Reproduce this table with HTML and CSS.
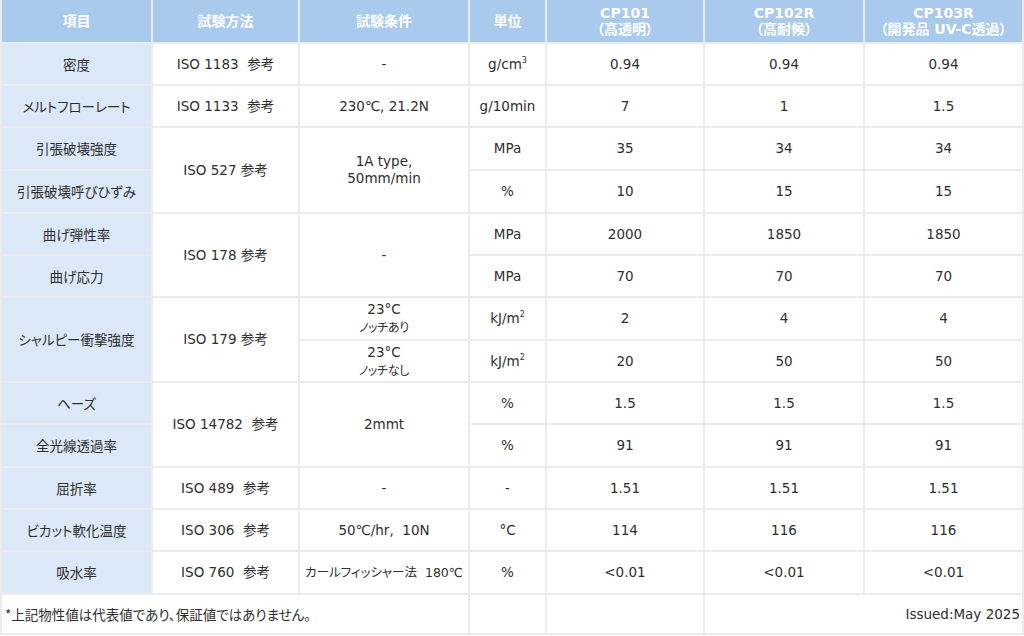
FILE: index.html
```html
<!DOCTYPE html>
<html lang="ja">
<head>
<meta charset="utf-8">
<title>物性表</title>
<link rel="stylesheet" href="styles.css">
</head>
<body>
<table class="spec">
  <colgroup>
    <col class="c1"><col class="c2"><col class="c3"><col class="c4"><col class="c5"><col class="c6"><col class="c7">
  </colgroup>
  <thead>
    <tr class="hr">
      <th>項目</th>
      <th>試験方法</th>
      <th>試験条件</th>
      <th>単位</th>
      <th>CP101<br><span class="sub">（高透明）</span></th>
      <th>CP102R<br><span class="sub">（高耐候）</span></th>
      <th>CP103R<br><span class="sub">（開発品 UV-C透過）</span></th>
    </tr>
  </thead>
  <tbody>
    <tr class="h40">
      <td class="item">密度</td>
      <td>ISO 1183&nbsp;&nbsp;参考</td>
      <td>-</td>
      <td>g/cm<sup>3</sup></td>
      <td>0.94</td><td>0.94</td><td>0.94</td>
    </tr>
    <tr class="h40">
      <td class="item">メルトフローレート</td>
      <td>ISO 1133&nbsp;&nbsp;参考</td>
      <td>230℃, 21.2N</td>
      <td>g/10min</td>
      <td>7</td><td>1</td><td>1.5</td>
    </tr>
    <tr class="h41">
      <td class="item">引張破壊強度</td>
      <td rowspan="2">ISO 527 参考</td>
      <td rowspan="2">1A type,<br>50mm/min</td>
      <td>MPa</td>
      <td>35</td><td>34</td><td>34</td>
    </tr>
    <tr class="h41">
      <td class="item">引張破壊呼びひずみ</td>
      <td>%</td>
      <td>10</td><td>15</td><td>15</td>
    </tr>
    <tr class="h40">
      <td class="item">曲げ弾性率</td>
      <td rowspan="2">ISO 178 参考</td>
      <td rowspan="2">-</td>
      <td>MPa</td>
      <td>2000</td><td>1850</td><td>1850</td>
    </tr>
    <tr class="h40">
      <td class="item">曲げ応力</td>
      <td>MPa</td>
      <td>70</td><td>70</td><td>70</td>
    </tr>
    <tr class="h41">
      <td class="item" rowspan="2">シャルピー衝撃強度</td>
      <td rowspan="2">ISO 179 参考</td>
      <td class="cond">23°C<br><span class="note">ノッチあり</span></td>
      <td>kJ/m<sup>2</sup></td>
      <td>2</td><td>4</td><td>4</td>
    </tr>
    <tr class="h40">
      <td class="cond">23°C<br><span class="note">ノッチなし</span></td>
      <td>kJ/m<sup>2</sup></td>
      <td>20</td><td>50</td><td>50</td>
    </tr>
    <tr class="h40">
      <td class="item">ヘーズ</td>
      <td rowspan="2">ISO 14782&nbsp;&nbsp;参考</td>
      <td rowspan="2">2mmt</td>
      <td>%</td>
      <td>1.5</td><td>1.5</td><td>1.5</td>
    </tr>
    <tr class="h41">
      <td class="item">全光線透過率</td>
      <td>%</td>
      <td>91</td><td>91</td><td>91</td>
    </tr>
    <tr class="h40">
      <td class="item">屈折率</td>
      <td>ISO 489&nbsp;&nbsp;参考</td>
      <td>-</td>
      <td>-</td>
      <td>1.51</td><td>1.51</td><td>1.51</td>
    </tr>
    <tr class="h40">
      <td class="item">ビカット軟化温度</td>
      <td>ISO 306&nbsp;&nbsp;参考</td>
      <td>50℃/hr,&nbsp;&nbsp;10N</td>
      <td>°C</td>
      <td>114</td><td>116</td><td>116</td>
    </tr>
    <tr class="h41">
      <td class="item">吸水率</td>
      <td>ISO 760&nbsp;&nbsp;参考</td>
      <td class="small">カールフィッシャー法&nbsp;&nbsp;180℃</td>
      <td>%</td>
      <td>&lt;0.01</td><td>&lt;0.01</td><td>&lt;0.01</td>
    </tr>
    <tr class="foot">
      <td colspan="3" class="footnote">*上記物性値は代表値であり、保証値ではありません。</td>
      <td></td>
      <td></td>
      <td colspan="2" class="issued">Issued:May 2025</td>
    </tr>
  </tbody>
</table>
</body>
</html>
```

FILE: styles.css
```css
html, body {
  margin: 0;
  padding: 0;
  background: #ffffff;
  overflow: hidden;
}

.spec {
  width: 1024px;
  table-layout: fixed;
  border-collapse: separate;
  border-spacing: 2px;
  background: #ebebeb;
  margin-top: -2px;
  font-family: "DejaVu Sans", "Noto Sans CJK JP", sans-serif;
  font-feature-settings: "palt";
  font-size: 13.5px;
  color: #2e2e2e;
}

.c1 { width: 149px; }
.c2 { width: 145px; }
.c3 { width: 168px; }
.c4 { width: 75px; }
.c5 { width: 156px; }
.c6 { width: 158px; }
.c7 { width: 157px; }

.spec th,
.spec td {
  padding: 0;
  text-align: center;
  vertical-align: middle;
  background: #ffffff;
  line-height: 17px;
}

.spec th {
  background: #a9caec;
  color: #ffffff;
  font-weight: bold;
  font-size: 14px;
  line-height: 16px;
  height: 42px;
}

.spec th .sub {
  font-weight: bold;
}

.spec td.item {
  background: #dbe8f7;
  font-family: "Noto Sans CJK JP", sans-serif;
  font-size: 13.5px;
}

.h40 td { height: 40px; }
.h41 td { height: 41px; }

.spec sup {
  font-size: 8px;
  line-height: 0;
  vertical-align: 6px;
}

.cond {
  line-height: 16px;
}

.note {
  font-family: "Noto Sans CJK JP", sans-serif;
  font-size: 12px;
  letter-spacing: -0.3px;
}

.small {
  font-size: 12.5px;
}

.foot td {
  height: 38px;
  font-size: 13px;
}

.spec td.footnote {
  text-align: left;
  padding-left: 3px;
  font-family: "Noto Sans CJK JP", sans-serif;
  font-size: 13.5px;
}

.spec td.issued {
  text-align: right;
  padding-right: 2px;
  font-size: 13.5px;
}
```
